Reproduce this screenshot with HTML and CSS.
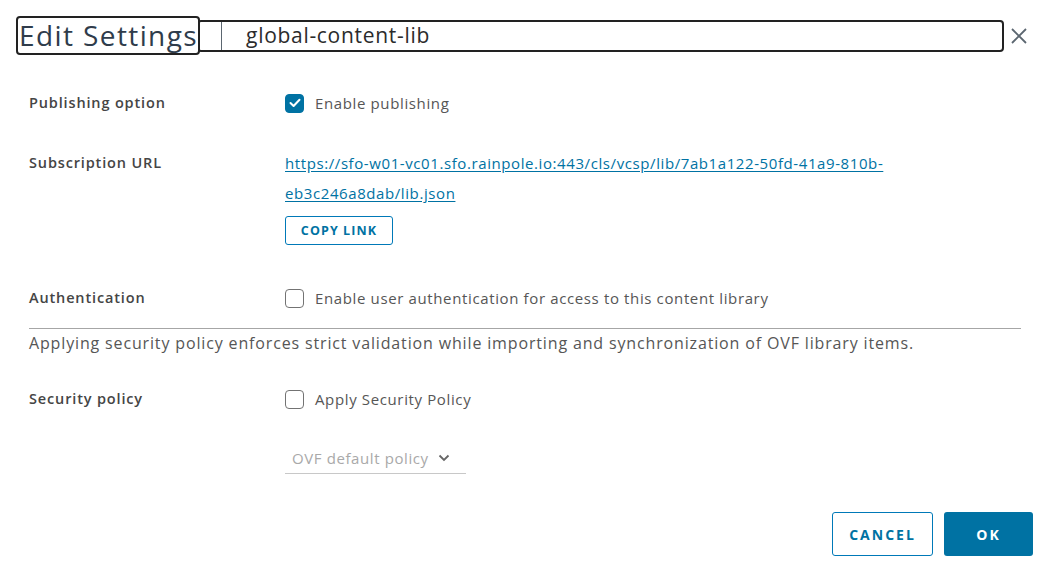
FILE: index.html
```html
<!DOCTYPE html>
<html lang="en">
<head>
    <meta charset="UTF-8">
    <title>Edit Settings</title>
    <link rel="stylesheet" href="styles.css">
</head>
<body>
    <div class="modal">
        <!-- Cabeçalho -->
        <header class="modal-header">
            <div class="title-box">Edit Settings</div>
            <div class="name-field">
                <span class="name-divider"></span>
                <span class="name-value">global-content-lib</span>
            </div>
            <button class="close-btn" aria-label="Close">
                <svg width="18" height="18" viewBox="0 0 18 18">
                    <path d="M2 2 L16 16 M16 2 L2 16" stroke="#5b6670" stroke-width="1.8" fill="none"/>
                </svg>
            </button>
        </header>

        <div class="modal-body">
            <div class="form-row row-publish">
                <div class="form-label">Publishing option</div>
                <label class="check">
                    <span class="box checked">
                        <svg width="12" height="10" viewBox="0 0 12 10"><path d="M1.5 5 L4.6 8 L10.5 1.8" stroke="#fff" stroke-width="2" fill="none" stroke-linecap="round" stroke-linejoin="round"/></svg>
                    </span>
                    Enable publishing
                </label>
            </div>

            <div class="form-row row-url">
                <div class="form-label">Subscription URL</div>
                <div class="url-block">
                    <a class="url-link" href="#">https://sfo-w01-vc01.sfo.rainpole.io:443/cls/vcsp/lib/7ab1a122-50fd-41a9-810b-<br>eb3c246a8dab/lib.json</a>
                    <button class="btn-outline btn-copy">COPY LINK</button>
                </div>
            </div>

            <div class="form-row row-auth">
                <div class="form-label">Authentication</div>
                <label class="check">
                    <span class="box"></span>
                    Enable user authentication for access to this content library
                </label>
            </div>

            <hr class="divider">
            <p class="policy-note">Applying security policy enforces strict validation while importing and synchronization of OVF library items.</p>

            <div class="form-row row-policy">
                <div class="form-label">Security policy</div>
                <label class="check">
                    <span class="box"></span>
                    Apply Security Policy
                </label>
            </div>

            <div class="form-row row-select">
                <div></div>
                <div class="select-disabled">
                    <span>OVF default policy</span>
                    <svg width="12" height="8" viewBox="0 0 12 8"><path d="M1.5 1.5 L6 6 L10.5 1.5" stroke="#666" stroke-width="1.8" fill="none"/></svg>
                </div>
            </div>
        </div>

        <footer class="modal-footer">
            <button class="btn-outline btn-lg">CANCEL</button>
            <button class="btn-primary btn-lg">OK</button>
        </footer>
    </div>
</body>
</html>
```

FILE: styles.css
```css
:root {
    --primary: #0072a3;
    --primary-border: #0079b8;
    --text: #565656;
    --label: #454545;
    --title: #2f3c4b;
}

* {
    box-sizing: border-box;
    margin: 0;
    padding: 0;
}

body {
    background: #fff;
    font-family: 'Open Sans', 'Liberation Sans', sans-serif;
    color: var(--text);
}

button {
    font-family: inherit;
    background: none;
    border: none;
    cursor: pointer;
}

/* Cabeçalho */
.modal-header {
    display: flex;
    align-items: center;
    padding: 16px 30px 0 16px;
    height: 55px;
}

.title-box {
    position: relative;
    z-index: 1;
    height: 39px;
    padding: 0 0 0 1px;
    border: 2px solid #222;
    border-radius: 4px;
    background: #fff;
    font-size: 28px;
    letter-spacing: 1.4px;
    line-height: 34px;
    color: var(--title);
    white-space: nowrap;
}

.name-field {
    flex: 1;
    display: flex;
    align-items: stretch;
    height: 32px;
    margin-left: -3px;
    border: 2px solid #222;
    border-radius: 4px;
}

.name-divider {
    width: 23px;
    border-right: 1px solid #5b6670;
}

.name-value {
    padding-left: 24px;
    font-size: 21px;
    letter-spacing: 0.7px;
    line-height: 27px;
    color: #2b2b2b;
}

.close-btn {
    margin-left: 6px;
    width: 18px;
    height: 18px;
    display: flex;
}

/* Formulário */
.modal-body {
    padding: 0 37px 0 29px;
}

.form-row {
    display: grid;
    grid-template-columns: 256px 1fr;
    align-items: center;
}

.form-label {
    font-size: 14.5px;
    font-weight: 600;
    letter-spacing: 0.85px;
    color: var(--label);
    line-height: 20px;
}

.check {
    display: flex;
    align-items: center;
    font-size: 15px;
    letter-spacing: 0.63px;
    line-height: 20px;
    color: var(--text);
}

.box {
    width: 19px;
    height: 19px;
    margin-right: 11px;
    border: 1px solid #737373;
    border-radius: 4px;
    display: flex;
    align-items: center;
    justify-content: center;
}

.box.checked {
    background: var(--primary);
    border-color: var(--primary);
}

.row-publish {
    margin-top: 38px;
}

.row-url {
    margin-top: 35px;
    align-items: start;
}

.row-url .form-label {
    line-height: 30px;
}

.url-link {
    display: block;
    font-size: 15px;
    letter-spacing: 0.59px;
    line-height: 30px;
    color: var(--primary);
    text-decoration: underline;
    text-underline-offset: 2px;
}

.btn-outline {
    border: 1px solid var(--primary-border);
    border-radius: 3px;
    color: var(--primary);
    font-weight: bold;
    background: #fff;
}

.btn-copy {
    margin-top: 8px;
    height: 29px;
    width: 108px;
    font-size: 12.5px;
    letter-spacing: 1.1px;
}

.row-auth {
    margin-top: 43px;
}

.divider {
    margin-top: 20px;
    border: none;
    border-top: 1.5px solid #a6a6a6;
}

.policy-note {
    margin-top: 4px;
    font-size: 16px;
    letter-spacing: 0.85px;
    line-height: 20px;
    color: var(--text);
    white-space: nowrap;
}

.row-policy {
    margin-top: 36px;
}

.row-select {
    margin-top: 37px;
}

.select-disabled {
    width: 181px;
    height: 28px;
    padding: 0 0 4px 7px;
    border-bottom: 1px solid #c8c8c8;
    display: flex;
    align-items: center;
    gap: 9px;
    font-size: 15px;
    letter-spacing: 0.6px;
    color: #a9a9a9;
}

/* Rodapé */
.modal-footer {
    display: flex;
    justify-content: flex-end;
    gap: 11px;
    margin-top: 38px;
    padding-right: 25px;
}

.btn-lg {
    height: 44px;
    font-size: 14px;
    font-weight: bold;
    letter-spacing: 2px;
}

.btn-outline.btn-lg {
    width: 101px;
}

.btn-primary {
    width: 89px;
    background: var(--primary);
    color: #fff;
    border-radius: 3px;
}
```
